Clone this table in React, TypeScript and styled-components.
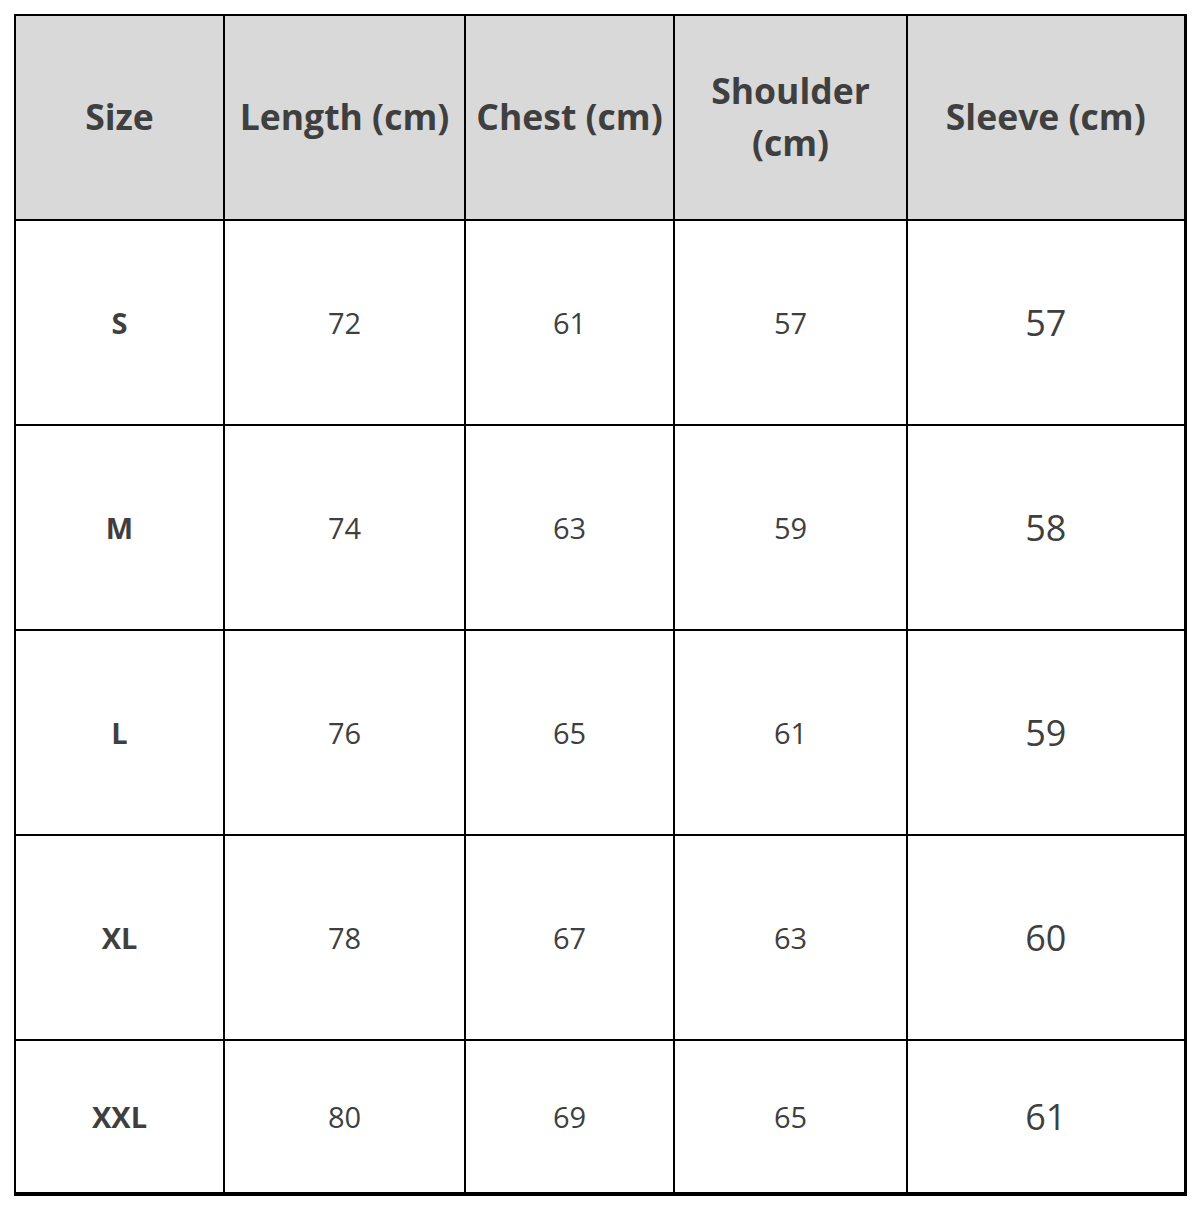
import React from "react";
import styled, { createGlobalStyle } from "styled-components";

const Global = createGlobalStyle`
  html, body { margin: 0; padding: 0; background: #fff; }
  body { font-family: "Open Sans", "Noto Sans", sans-serif; }
`;

const Wrap = styled.div`
  padding: 14px 0 0 14px;
`;

const Table = styled.table`
  border-collapse: collapse;
  table-layout: fixed;
  width: 1170px;
  border-top: 2px solid #000;
  border-left: 2px solid #000;
  border-right: 3px solid #000;
  border-bottom: 4px solid #000;
  color: #3f3f3f;
`;

const Th = styled.th`
  background: #d9d9d9;
  height: 199px;
  border: 2px solid #000;
  font-size: 35.5px;
  font-weight: 700;
  line-height: 52px;
  text-align: center;
  vertical-align: middle;
  padding: 0 2px 4px;
  white-space: nowrap;
`;

const Td = styled.td<{ $kind: "size" | "num" | "big"; $last?: boolean }>`
  height: ${(p) => (p.$last ? "151px" : "203px")};
  border: 2px solid #000;
  text-align: center;
  vertical-align: middle;
  padding: 0;
  font-size: ${(p) => (p.$kind === "big" ? "36px" : "29px")};
  font-weight: ${(p) => (p.$kind === "size" ? 700 : 400)};
`;

const widths = [209, 241, 209, 233, 278];
const headers: React.ReactNode[] = [
  "Size",
  "Length (cm)",
  "Chest (cm)",
  <>Shoulder<br />(cm)</>,
  "Sleeve (cm)",
];
const rows = [
  ["S", "72", "61", "57", "57"],
  ["M", "74", "63", "59", "58"],
  ["L", "76", "65", "61", "59"],
  ["XL", "78", "67", "63", "60"],
  ["XXL", "80", "69", "65", "61"],
];

export default function App() {
  return (
    <>
      <Global />
      <Wrap>
        <Table>
          <colgroup>
            {widths.map((w, i) => (
              <col key={i} style={{ width: w }} />
            ))}
          </colgroup>
          <thead>
            <tr>
              {headers.map((h, i) => (
                <Th key={i}>{h}</Th>
              ))}
            </tr>
          </thead>
          <tbody>
            {rows.map((r, ri) => (
              <tr key={ri}>
                {r.map((c, ci) => (
                  <Td
                    key={ci}
                    $kind={ci === 0 ? "size" : ci === 4 ? "big" : "num"}
                    $last={ri === rows.length - 1}
                  >
                    {c}
                  </Td>
                ))}
              </tr>
            ))}
          </tbody>
        </Table>
      </Wrap>
    </>
  );
}
